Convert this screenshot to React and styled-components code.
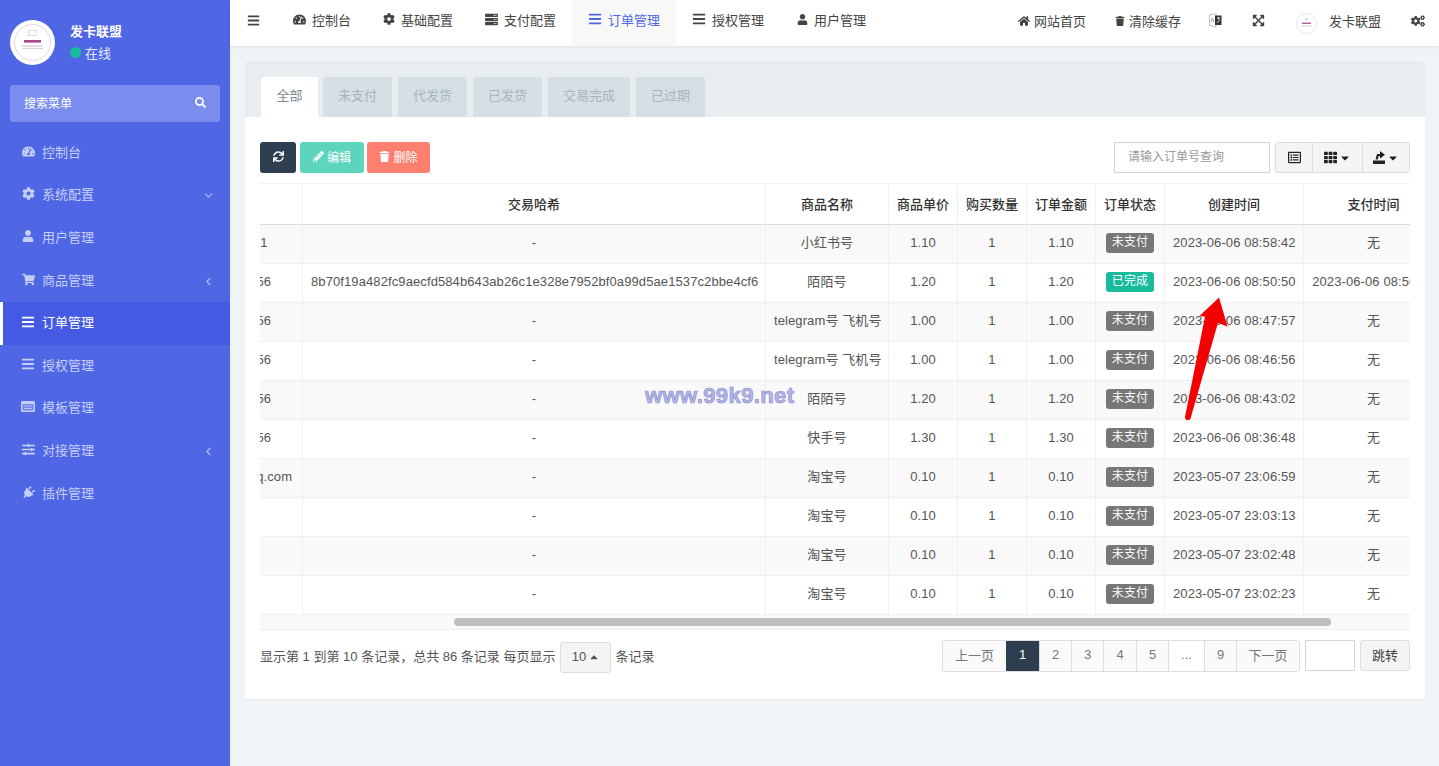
import React, { useLayoutEffect, useRef } from 'react';
import styled, { createGlobalStyle } from 'styled-components';
import {
  FaBars, FaCaretDown, FaCaretUp, FaCog, FaCogs, FaExpandArrowsAlt, FaHome,
  FaPencilAlt, FaPlug, FaRegListAlt, FaSearch, FaServer, FaShoppingCart, FaSlidersH, FaSync,
  FaTachometerAlt, FaTh, FaTrash, FaUser,
} from 'react-icons/fa';
import { FiChevronDown, FiChevronLeft } from 'react-icons/fi';

const TABLE_WIDTH = 1508;
const VIEW_WIDTH = 1150;
const SCROLL_LEFT = 254;

const GlobalStyle = createGlobalStyle`
  html, body { margin: 0; padding: 0; height: 100%; }
  body {
    font-family: "Liberation Sans", "Noto Sans CJK SC", sans-serif;
    font-size: 13px;
    color: #555;
    background: #f1f4f6;
  }
  * { box-sizing: border-box; }
`;

const Page = styled.div`
  position: relative;
  display: flex;
  height: 100vh;
  overflow: hidden;
`;

const IconSlot = styled.span`
  width: ${(p) => p.$w || 12}px;
  flex: none;
  display: flex;
  justify-content: center;
  align-items: center;
  transform: ${(p) => (p.$tilt ? 'rotate(45deg)' : 'none')};
  svg { flex: none; }
`;

/* sidebar */
const Sidebar = styled.aside`
  width: 230px;
  flex: none;
  background: #4f66e5;
`;
const UserPanel = styled.div`
  display: flex;
  align-items: center;
  gap: 15px;
  padding: 20px 10px;
  height: 85px;
`;
const UserText = styled.div`
  padding-bottom: 2px;
`;
const UserName = styled.div`
  color: #fff;
  font-weight: 700;
  margin-bottom: 3px;
`;
const Online = styled.div`
  display: flex;
  align-items: center;
  gap: 4px;
  color: #e6eaff;
`;
const Dot = styled.i`
  width: 11px;
  height: 11px;
  border-radius: 50%;
  background: #18bc9c;
`;
const SideSearch = styled.div`
  margin: 0 10px 10px;
  height: 37px;
  padding: 0 14px 2px;
  display: flex;
  align-items: center;
  justify-content: space-between;
  background: #7a8ced;
  border-radius: 3px;
  color: #fff;
  font-size: 12px;
`;
const SideItem = styled.div`
  height: 42.6px;
  display: flex;
  align-items: center;
  gap: 8px;
  padding: 0 15px 4px ${(p) => (p.$active ? '19px' : '22px')};
  color: ${(p) => (p.$active ? '#fff' : '#c6cffa')};
  background: ${(p) => (p.$active ? '#445ae2' : 'transparent')};
  border-left: ${(p) => (p.$active ? '3px solid #fff' : 'none')};
`;
const Chevron = styled.span`
  margin-left: auto;
  display: flex;
  padding-top: 4px;
  color: #b4bef7;
  svg { width: 13px; height: 13px; }
`;

/* top bar */
const Main = styled.div`
  flex: 1;
  min-width: 0;
`;
const TopBar = styled.header`
  height: 46px;
  display: flex;
  align-items: center;
  background: #fff;
  box-shadow: 0 1px 3px rgba(0, 0, 0, 0.08);
  color: #444;
`;
const Burger = styled.span`
  display: flex;
  width: 47px;
  padding: 0 0 6px 17px;
`;
const TopNav = styled.nav`
  display: flex;
`;
const TopItem = styled.div`
  height: 46px;
  padding: 0 16px 8px;
  display: flex;
  align-items: center;
  gap: 6px;
  color: ${(p) => (p.$active ? '#4f66e5' : '#444')};
  background: ${(p) => (p.$active ? '#f8f8f9' : 'transparent')};
`;
const TopRight = styled.div`
  margin-left: auto;
  display: flex;
  align-items: center;
  padding-right: 14px;
`;
const RightItem = styled.div`
  display: flex;
  align-items: center;
  gap: ${(p) => p.$gap || 4}px;
  margin-right: ${(p) => p.$after || 0}px;
  padding-bottom: ${(p) => p.$lift ?? 5}px;
  svg { flex: none; }
`;
const RightName = styled.span`
  padding-bottom: 5px;
`;

/* panel */
const Content = styled.main`
  padding: 15px 14px 0 15px;
`;
const Panel = styled.section`
  background: #fff;
  border-radius: 3px;
  box-shadow: 0 1px 1px rgba(0, 0, 0, 0.05);
  height: 638px;
`;
const TabBar = styled.div`
  height: 56px;
  padding: 16px 0 0 16px;
  display: flex;
  gap: 6px;
  background: #e8edf0;
  border-radius: 3px 3px 0 0;
`;
const Tab = styled.div`
  height: 40px;
  padding: 0 ${(p) => (p.$active ? '15.5px' : '15px')} 6px;
  margin-right: ${(p) => (p.$active ? '-1px' : '0')};
  display: flex;
  align-items: center;
  border-radius: 2px 2px 0 0;
  background: ${(p) => (p.$active ? '#fff' : '#d5dfe6')};
  color: ${(p) => (p.$active ? '#7b8a92' : '#a6b4bd')};
`;
const PanelBody = styled.div`
  padding: 25px 15px 0;
`;
const Toolbar = styled.div`
  height: 31px;
  display: flex;
  align-items: stretch;
  margin-bottom: 10px;
`;
const ActionButton = styled.button`
  width: ${(p) => p.$w}px;
  margin-right: ${(p) => p.$after || 0}px;
  display: flex;
  align-items: center;
  justify-content: center;
  gap: 3px;
  padding: 0 0 3px;
  border: none;
  border-radius: 3px;
  font: inherit;
  font-size: 12px;
  color: #fff;
  background: ${(p) => p.$bg};
  svg { width: 11px; height: 11px; }
`;
const SearchInput = styled.input`
  width: 156px;
  margin-left: auto;
  margin-right: 5px;
  padding: 0 13px 2px;
  border: 1px solid #d2d6de;
  font: inherit;
  font-size: 12px;
  outline: none;
  &::placeholder { color: #999; }
`;
const ButtonGroup = styled.div`
  display: flex;
  border: 1px solid #ddd;
  border-radius: 3px;
  background: #f4f4f4;
`;
const GroupButton = styled.div`
  width: ${(p) => p.$w}px;
  display: flex;
  align-items: center;
  justify-content: center;
  gap: 2px;
  color: #222;
  border-left: ${(p) => (p.$first ? 'none' : '1px solid #ddd')};
`;

/* table */
const TableScroll = styled.div`
  width: ${VIEW_WIDTH}px;
  overflow: hidden;
`;
const Table = styled.table`
  width: ${TABLE_WIDTH}px;
  table-layout: fixed;
  border-collapse: collapse;
`;
const Th = styled.th`
  height: 41px;
  padding: 0 0 2px;
  font-weight: 500;
  color: #333;
  text-align: center;
  border: 1px solid #f0f0f0;
  border-bottom: 1px solid #ddd;
  white-space: nowrap;
`;
const Row = styled.tr`
  background: ${(p) => (p.$odd ? '#f9f9f9' : '#fff')};
`;
const Td = styled.td`
  height: 39px;
  padding: 0 8px ${(p) => p.$lift ?? 4}px;
  text-align: center;
  letter-spacing: 0.1px;
  border: 1px solid #f0f0f0;
  white-space: nowrap;
  overflow: hidden;
`;
const Badge = styled.span`
  display: inline-block;
  width: 48px;
  height: 20px;
  line-height: 19px;
  border-radius: 3px;
  font-size: 12px;
  color: #fff;
  background: ${(p) => (p.$done ? '#18bc9c' : '#777')};
`;
const ScrollTrack = styled.div`
  height: 15px;
  display: flex;
  align-items: center;
  background: #f9f9f9;
  border-bottom: 1px solid #eee;
`;
const ScrollThumb = styled.div`
  height: 8px;
  border-radius: 4px;
  background: #bfbfbf;
`;

/* footer */
const Footer = styled.div`
  margin-top: 10px;
  height: 33px;
  padding-bottom: 3px;
  display: flex;
  align-items: center;
`;
const PageSize = styled.div`
  width: 51px;
  height: 31px;
  margin: 5px 4px 0 5px;
  padding-bottom: 2px;
  display: flex;
  align-items: center;
  justify-content: center;
  gap: 2px;
  background: #f4f4f4;
  border: 1px solid #ddd;
  border-radius: 3px;
`;
const Pager = styled.div`
  margin-left: auto;
  align-self: flex-start;
  display: flex;
  height: 32px;
  border: 1px solid #ddd;
  border-radius: 3px;
  background: #fafafa;
`;
const PageCell = styled.div`
  width: ${(p) => p.$w}px;
  padding-bottom: 3px;
  display: flex;
  align-items: center;
  justify-content: center;
  color: ${(p) => (p.$active ? '#fff' : '#777')};
  background: ${(p) => (p.$active ? '#2c3e50' : p.$blank ? '#fff' : 'transparent')};
  border-left: ${(p) => (p.$first || p.$active ? 'none' : '1px solid #ddd')};
`;
const JumpInput = styled.input`
  width: 50px;
  height: 31px;
  margin: 0 5px;
  align-self: flex-start;
  border: 1px solid #d2d6de;
  outline: none;
`;
const JumpButton = styled.div`
  width: 50px;
  height: 31px;
  padding-bottom: 3px;
  align-self: flex-start;
  display: flex;
  align-items: center;
  justify-content: center;
  background: #f4f4f4;
  border: 1px solid #ddd;
  border-radius: 3px;
  color: #444;
`;

/* things lying over the table */
const Watermark = styled.div`
  position: absolute;
  left: 645px;
  top: 383px;
  font-size: 22px;
  font-weight: 700;
  letter-spacing: 0.4px;
  color: #b4b6e6;
  -webkit-text-stroke: 0.7px #8d90d2;
  pointer-events: none;
`;
const ArrowMark = styled.svg`
  position: absolute;
  left: 1180px;
  top: 290px;
  pointer-events: none;
`;

function Logo() {
  return (
    <svg width="45" height="45" viewBox="0 0 45 45" style={{ flex: 'none' }}>
      <circle cx="22.5" cy="22.5" r="22.5" fill="#fff" />
      <circle cx="22.5" cy="22.5" r="18" fill="#fff" stroke="#dcc8e6" strokeWidth="0.8" />
      <rect x="18.500" y="10.500" width="8" height="5" fill="none" stroke="#cfc4d6" strokeWidth="0.6" />
      <rect x="14" y="20" width="17" height="2.6" fill="#a8488f" />
      <rect x="12.500" y="25.500" width="20" height="1" fill="#cdb0da" />
      <rect x="12" y="28" width="21" height="0.5" fill="#bd98cc" />
    </svg>
  );
}

function SmallLogo() {
  return (
    <svg width="21" height="21" viewBox="0 0 21 21" style={{ flex: 'none' }}>
      <circle cx="10.500" cy="10.500" r="10" fill="#fff" stroke="#e6d9ee" strokeWidth="0.8" />
      <rect x="9" y="5" width="3" height="2" fill="#ddd3e2" />
      <rect x="6" y="9.500" width="9" height="1.500" fill="#b565a5" />
      <rect x="5" y="12.500" width="11" height="0.800" fill="#d8c2e2" />
    </svg>
  );
}

function TranslateIcon() {
  return (
    <svg width="13" height="15" viewBox="0 0 13 15">
      <path d="M.5 2 7 .5V14l-6.500-1.500z" fill="#fff" stroke="#aaa" strokeWidth="0.7" />
      <path d="M6 2.500h6.500V12H6z" fill="#333" />
      <path d="M8 5h3M9.500 4v2.500M8 9.500c1.500-.5 2.500-1.500 2.500-3" fill="none" stroke="#fff" strokeWidth="0.8" />
      <path d="M2 9 3.500 5 5 9" fill="none" stroke="#888" strokeWidth="0.8" />
    </svg>
  );
}

function ExportIcon() {
  return (
    <svg width="12" height="13" viewBox="0 0 12 13">
      <path d="M0 9.500h12V13H0z" fill="#222" />
      <path d="M2.500 8.500 4 3h3V0l5 3.800-5 3.700V5.200H5.500L4.800 8.500z" fill="#222" />
    </svg>
  );
}

function TemplateIcon() {
  return (
    <svg width="14" height="11" viewBox="0 0 14 11">
      <rect width="14" height="11" rx="1.500" fill="#c6cffa" />
      <rect x="1.500" y="3" width="11" height="6.500" fill="#7384ea" />
      <path d="M3 5h8M3 7.500h8" stroke="#c6cffa" strokeWidth="0.8" />
    </svg>
  );
}

const sideItems = [
  { icon: FaTachometerAlt, label: '控制台' },
  { icon: FaCog, label: '系统配置', chevron: FiChevronDown },
  { icon: FaUser, label: '用户管理', size: 12 },
  { icon: FaShoppingCart, label: '商品管理', chevron: FiChevronLeft },
  { icon: FaBars, label: '订单管理', size: 14, active: true },
  { icon: FaBars, label: '授权管理', size: 14 },
  { icon: TemplateIcon, label: '模板管理' },
  { icon: FaSlidersH, label: '对接管理', chevron: FiChevronLeft },
  { icon: FaPlug, label: '插件管理', tilt: true },
];

const topItems = [
  { icon: FaTachometerAlt, label: '控制台', w: 13, size: 13 },
  { icon: FaCog, label: '基础配置', w: 12, size: 12 },
  { icon: FaServer, label: '支付配置', w: 13, size: 13 },
  { icon: FaBars, label: '订单管理', w: 14, size: 14, active: true },
  { icon: FaBars, label: '授权管理', w: 14, size: 14 },
  { icon: FaUser, label: '用户管理', w: 12, size: 11 },
];

const tabs = ['全部', '未支付', '代发货', '已发货', '交易完成', '已过期'];

const columns = [
  { label: '订单编号', width: 160 },
  { label: '联系人', width: 136 },
  { label: '交易哈希', width: 463 },
  { label: '商品名称', width: 123 },
  { label: '商品单价', width: 69 },
  { label: '购买数量', width: 69 },
  { label: '订单金额', width: 69 },
  { label: '订单状态', width: 69 },
  { label: '创建时间', width: 139 },
  { label: '支付时间', width: 140 },
  { label: '操作', width: 71 },
];

const HASH = '8b70f19a482fc9aecfd584b643ab26c1e328e7952bf0a99d5ae1537c2bbe4cf6';

const rows = [
  { contact: '123456781', name: '小红书号', price: '1.10', created: '2023-06-06 08:58:42' },
  { contact: '1234567856', hash: HASH, name: '陌陌号', price: '1.20', done: true, created: '2023-06-06 08:50:50', paid: '2023-06-06 08:50:58' },
  { contact: '1234567856', name: 'telegram号 飞机号', price: '1.00', created: '2023-06-06 08:47:57' },
  { contact: '1234567856', name: 'telegram号 飞机号', price: '1.00', created: '2023-06-06 08:46:56' },
  { contact: '1234567856', name: '陌陌号', price: '1.20', created: '2023-06-06 08:43:02' },
  { contact: '1234567856', name: '快手号', price: '1.30', created: '2023-06-06 08:36:48' },
  { contact: '12345678@qq.com', name: '淘宝号', price: '0.10', created: '2023-05-07 23:06:59' },
  { contact: '', name: '淘宝号', price: '0.10', created: '2023-05-07 23:03:13' },
  { contact: '', name: '淘宝号', price: '0.10', created: '2023-05-07 23:02:48' },
  { contact: '', name: '淘宝号', price: '0.10', created: '2023-05-07 23:02:23' },
];

const pages = [
  { label: '上一页', w: 63, first: true },
  { label: '1', w: 33, active: true },
  { label: '2', w: 32 },
  { label: '3', w: 32 },
  { label: '4', w: 33 },
  { label: '5', w: 32 },
  { label: '...', w: 36, blank: true },
  { label: '9', w: 32 },
  { label: '下一页', w: 63 },
];

export default function App() {
  const scroller = useRef(null);

  // the table sits scrolled to the right in the screenshot
  useLayoutEffect(() => {
    scroller.current.scrollLeft = SCROLL_LEFT;
  }, []);

  return (
    <Page>
      <GlobalStyle />
      <Sidebar>
        <UserPanel>
          <Logo />
          <UserText>
            <UserName>发卡联盟</UserName>
            <Online><Dot />在线</Online>
          </UserText>
        </UserPanel>
        <SideSearch>搜索菜单<FaSearch size={11} /></SideSearch>
        {sideItems.map((item) => (
          <SideItem key={item.label} $active={item.active}>
            <IconSlot $tilt={item.tilt}><item.icon size={item.size || 13} /></IconSlot>
            {item.label}
            {item.chevron && <Chevron><item.chevron /></Chevron>}
          </SideItem>
        ))}
      </Sidebar>

      <Main>
        <TopBar>
          <Burger><FaBars size={13} /></Burger>
          <TopNav>
            {topItems.map((item) => (
              <TopItem key={item.label} $active={item.active}>
                <IconSlot $w={item.w}><item.icon size={item.size} /></IconSlot>
                {item.label}
              </TopItem>
            ))}
          </TopNav>
          <TopRight>
            <RightItem $after={29}><FaHome size={12} />网站首页</RightItem>
            <RightItem $after={28}><FaTrash size={10} />清除缓存</RightItem>
            <RightItem $after={30}><TranslateIcon /></RightItem>
            <RightItem $after={31}><FaExpandArrowsAlt size={13} /></RightItem>
            <RightItem $after={30} $gap={12} $lift={0}><SmallLogo /><RightName>发卡联盟</RightName></RightItem>
            <RightItem><FaCogs size={14} /></RightItem>
          </TopRight>
        </TopBar>

        <Content>
          <Panel>
            <TabBar>
              {tabs.map((tab, index) => (
                <Tab key={tab} $active={index === 0}>{tab}</Tab>
              ))}
            </TabBar>
            <PanelBody>
              <Toolbar>
                <ActionButton $w={36} $after={4} $bg="#2c3e50"><FaSync /></ActionButton>
                <ActionButton $w={64} $after={3} $bg="#5dd5bd"><FaPencilAlt />编辑</ActionButton>
                <ActionButton $w={63} $bg="#fc7f70"><FaTrash />删除</ActionButton>
                <SearchInput placeholder="请输入订单号查询" />
                <ButtonGroup>
                  <GroupButton $w={36} $first><FaRegListAlt size={13} /></GroupButton>
                  <GroupButton $w={50}><FaTh size={13} /><FaCaretDown size={12} /></GroupButton>
                  <GroupButton $w={47}><ExportIcon /><FaCaretDown size={12} /></GroupButton>
                </ButtonGroup>
              </Toolbar>

              <TableScroll ref={scroller}>
                <Table>
                  <colgroup>
                    {columns.map((col) => <col key={col.label} width={col.width} />)}
                  </colgroup>
                  <thead>
                    <tr>
                      {columns.map((col) => <Th key={col.label}>{col.label}</Th>)}
                    </tr>
                  </thead>
                  <tbody>
                    {rows.map((row, index) => (
                      <Row key={row.created} $odd={index % 2 === 0}>
                        <Td>{202306060000 + index}</Td>
                        <Td>{row.contact}</Td>
                        <Td>{row.hash || '-'}</Td>
                        <Td $lift={6}>{row.name}</Td>
                        <Td>{row.price}</Td>
                        <Td>1</Td>
                        <Td>{row.price}</Td>
                        <Td $lift={2}><Badge $done={row.done}>{row.done ? '已完成' : '未支付'}</Badge></Td>
                        <Td>{row.created}</Td>
                        <Td $lift={row.paid ? 4 : 6}>{row.paid || '无'}</Td>
                        <Td>-</Td>
                      </Row>
                    ))}
                  </tbody>
                </Table>
              </TableScroll>
              <ScrollTrack>
                <ScrollThumb
                  style={{
                    marginLeft: (SCROLL_LEFT * VIEW_WIDTH) / TABLE_WIDTH,
                    width: (VIEW_WIDTH * VIEW_WIDTH) / TABLE_WIDTH,
                  }}
                />
              </ScrollTrack>

              <Footer>
                显示第 1 到第 10 条记录，总共 86 条记录 每页显示
                <PageSize>10<FaCaretUp size={12} /></PageSize>
                条记录
                <Pager>
                  {pages.map((cell) => (
                    <PageCell key={cell.label} $w={cell.w} $first={cell.first} $active={cell.active} $blank={cell.blank}>
                      {cell.label}
                    </PageCell>
                  ))}
                </Pager>
                <JumpInput />
                <JumpButton>跳转</JumpButton>
              </Footer>
            </PanelBody>
          </Panel>
        </Content>
      </Main>

      <Watermark>www.99k9.net</Watermark>
      <ArrowMark width="60" height="140" viewBox="0 0 60 140">
        <path d="M39 7.500 19.500 26 25 26.700 5 127c-.5 3 4 4.500 5.500 1.500L38 32.700 47.600 36.700z" fill="#f40000" />
      </ArrowMark>
    </Page>
  );
}
